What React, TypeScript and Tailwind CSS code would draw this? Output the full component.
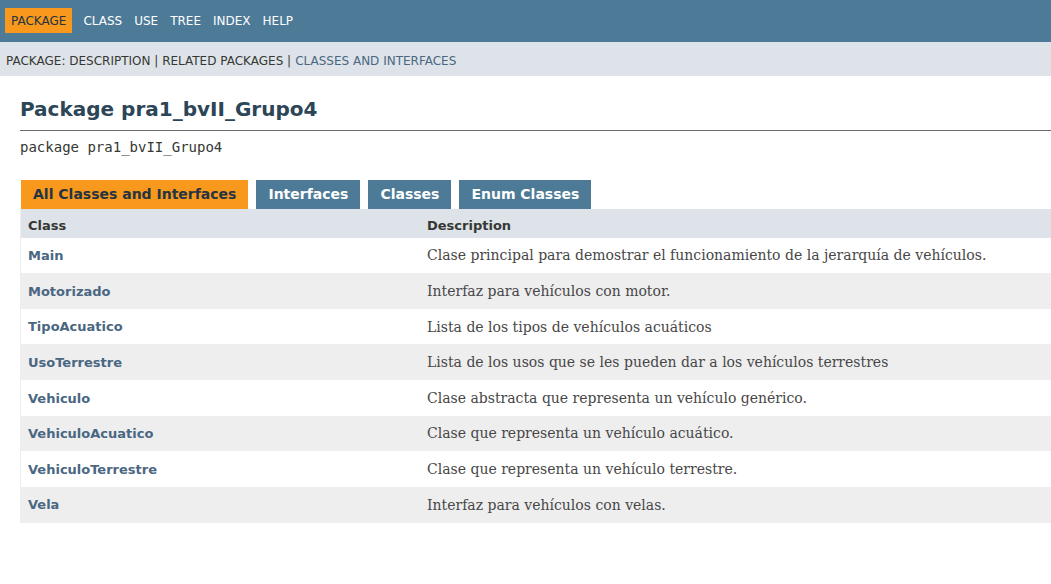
const navLinks = ['CLASS', 'USE', 'TREE', 'INDEX', 'HELP'];

const tabs = [
  { name: 'All Classes and Interfaces', active: true },
  { name: 'Interfaces', active: false },
  { name: 'Classes', active: false },
  { name: 'Enum Classes', active: false },
];

const rows = [
  { name: 'Main', desc: 'Clase principal para demostrar el funcionamiento de la jerarquía de vehículos.' },
  { name: 'Motorizado', desc: 'Interfaz para vehículos con motor.' },
  { name: 'TipoAcuatico', desc: 'Lista de los tipos de vehículos acuáticos' },
  { name: 'UsoTerrestre', desc: 'Lista de los usos que se les pueden dar a los vehículos terrestres' },
  { name: 'Vehiculo', desc: 'Clase abstracta que representa un vehículo genérico.' },
  { name: 'VehiculoAcuatico', desc: 'Clase que representa un vehículo acuático.' },
  { name: 'VehiculoTerrestre', desc: 'Clase que representa un vehículo terrestre.' },
  { name: 'Vela', desc: 'Interfaz para vehículos con velas.' },
];

export default function App() {
  return (
    <div className="min-h-[584px] bg-white font-['DejaVu_Sans',sans-serif] text-[#353833]">
      {/* top nav */}
      <header>
        <nav className="flex h-[42px] items-start bg-[#4d7a97] pl-[5px] pt-[8px]">
          <ul className="flex text-[12px] leading-[15px]">
            <li className="mr-[5px] bg-[#f8981d] px-[6px] pb-[4px] pt-[6px] text-[#253441]">PACKAGE</li>
            {navLinks.map((item) => (
              <li key={item} className="px-[6px] pb-[4px] pt-[6px] text-white">
                {item}
              </li>
            ))}
          </ul>
        </nav>
        <div className="flex h-[34px] items-center bg-[#dee3e9] pl-[6px] pt-[3px] text-[12px]">
          <span>PACKAGE: DESCRIPTION | RELATED PACKAGES | </span>
          <a href="#" className="ml-[4px] text-[#4a6782]">
            CLASSES AND INTERFACES
          </a>
        </div>
      </header>

      <main className="pl-5">
        <div className="mt-[21px] border-b-[1.5px] border-[#6b6b6b] pb-[9px]">
          <h1 className="text-[20px] font-bold leading-[24px] text-[#2c4557]">Package pra1_bvII_Grupo4</h1>
        </div>
        <div className="mt-[8px] font-['DejaVu_Sans_Mono',monospace] text-[14px] leading-[17px]">
          package pra1_bvII_Grupo4
        </div>

        <div className="mt-[23.5px] flex gap-2 pl-px">
          {tabs.map((t) => (
            <button
              key={t.name}
              type="button"
              className={
                t.active
                  ? 'h-[29px] bg-[#f8981d] px-3 text-[14px] font-bold text-[#253441]'
                  : 'h-[29px] bg-[#4d7a97] px-3 text-[14px] font-bold text-white'
              }
            >
              {t.name}
            </button>
          ))}
        </div>

        <div className="grid grid-cols-[399px_1fr] border-l border-[#eeeeef]">
          <div className="flex h-[29px] items-center bg-[#dee3e9] px-[7px] pt-[5px] text-[13px] font-bold">Class</div>
          <div className="flex h-[29px] items-center bg-[#dee3e9] px-[7px] pt-[5px] text-[13px] font-bold">Description</div>
          {rows.map((r, i) => (
            <div key={r.name} className="contents">
              <div
                className={
                  i % 2 === 0
                    ? 'flex h-[35.625px] items-center bg-white px-[7px] pt-px text-[13px] font-bold text-[#4a6782]'
                    : 'flex h-[35.625px] items-center bg-[#eeeeef] px-[7px] pt-px text-[13px] font-bold text-[#4a6782]'
                }
              >
                <a href="#">{r.name}</a>
              </div>
              <div
                className={
                  i % 2 === 0
                    ? "flex h-[35.625px] items-center bg-white px-[7px] pt-px font-['DejaVu_Serif',serif] text-[14px] text-[#474747]"
                    : "flex h-[35.625px] items-center bg-[#eeeeef] px-[7px] pt-px font-['DejaVu_Serif',serif] text-[14px] text-[#474747]"
                }
              >
                {r.desc}
              </div>
            </div>
          ))}
        </div>
      </main>
    </div>
  );
}
